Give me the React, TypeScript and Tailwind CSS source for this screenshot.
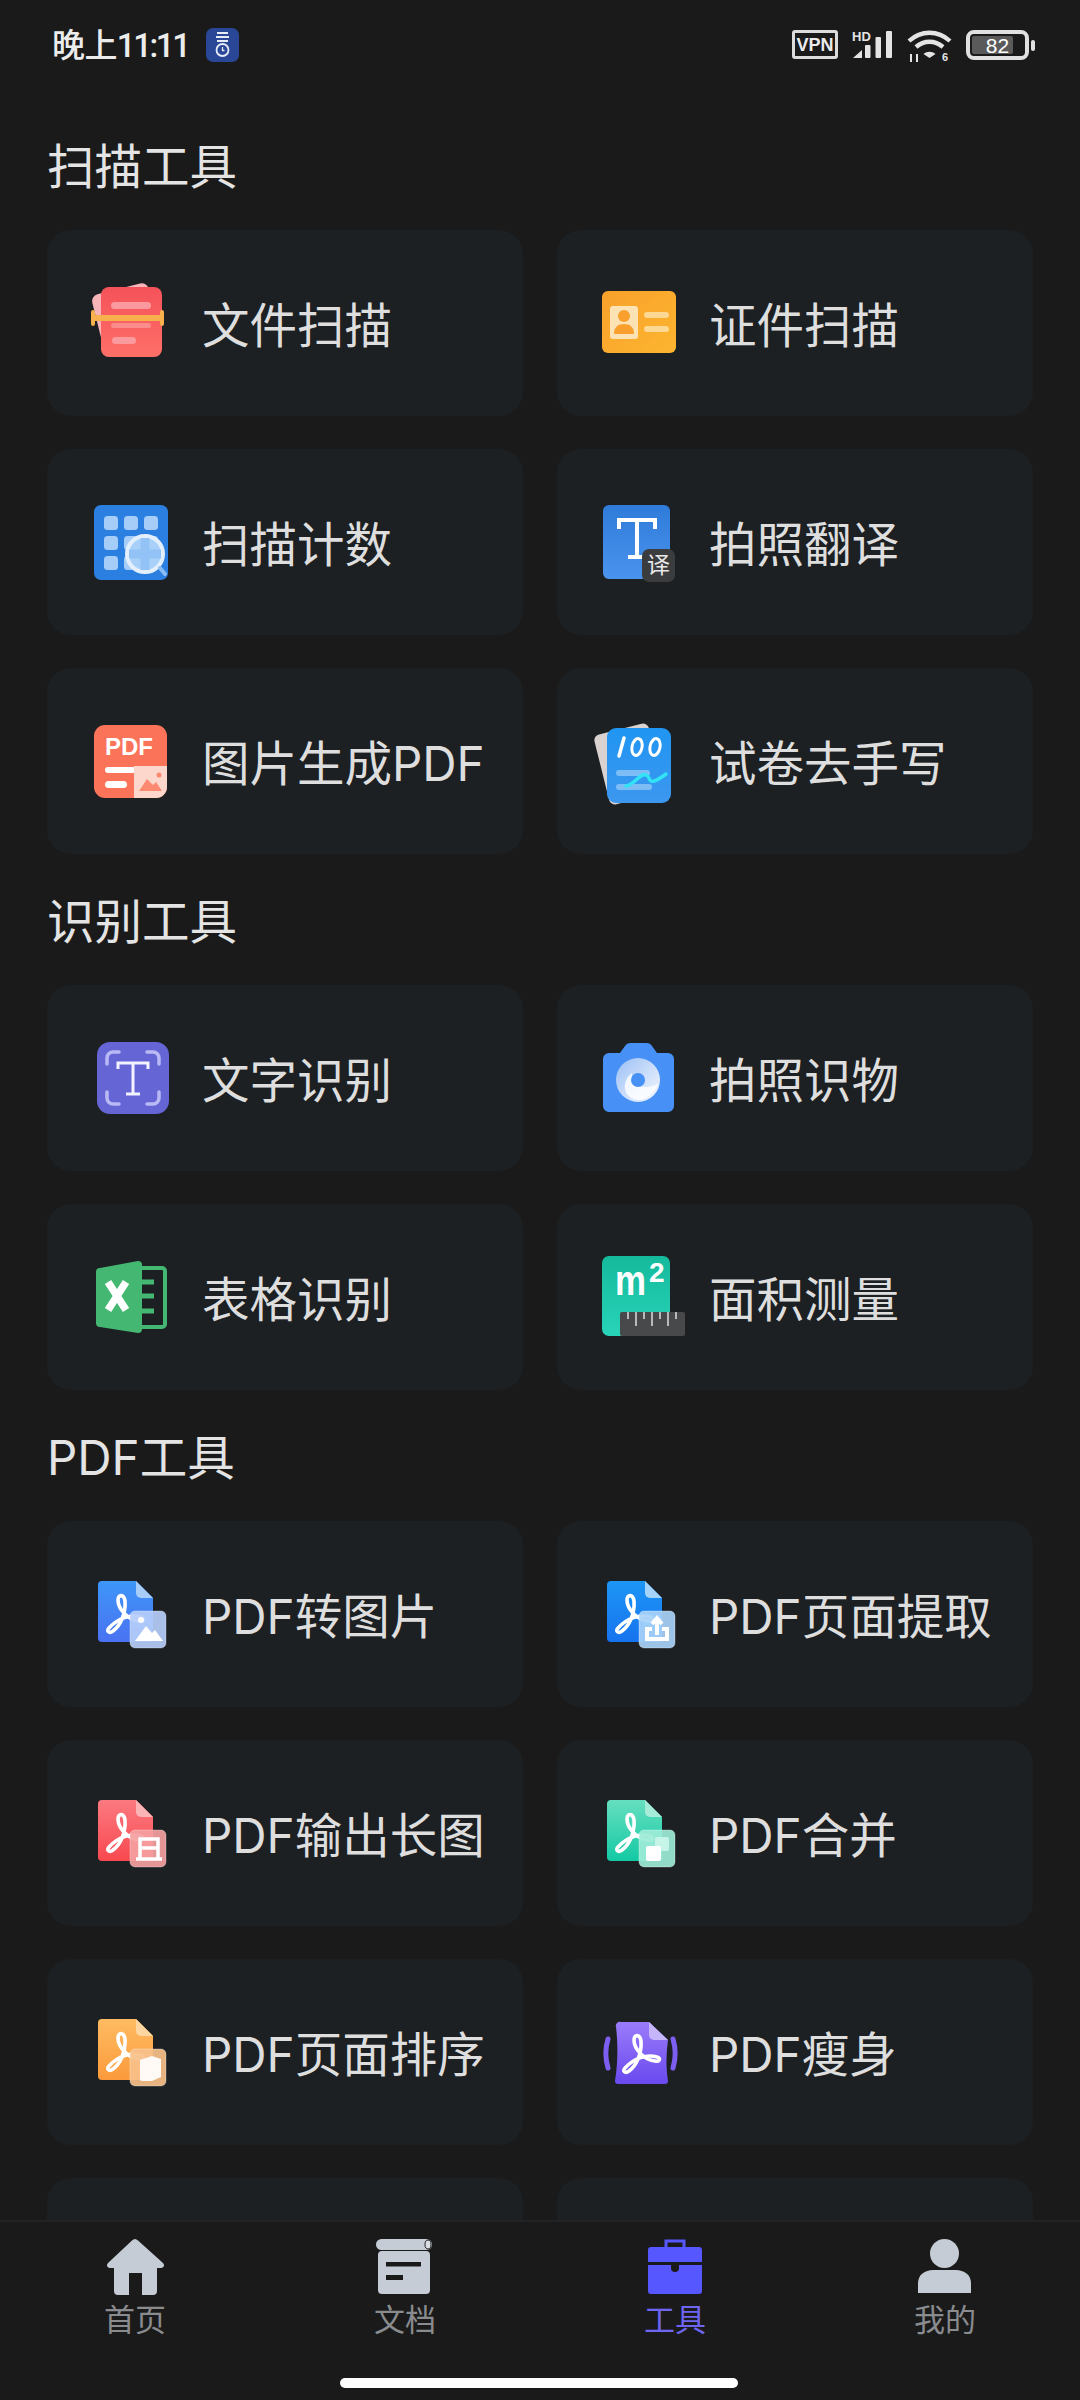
import type { ReactNode } from "react";

const BODY_FONT = "font-['Inter','Noto_Sans_CJK_SC',sans-serif]";

// Adobe style glyph shared by all the PDF tools
function AcrobatMark({ dx = 0, dy = 0 }: { dx?: number; dy?: number }) {
  return (
    <path
      transform={`translate(${dx} ${dy})`}
      d="M27 59c-3 3 0 6 4 3 7-5 13-17 12-30-1-7-7-7-7-1 0 9 10 20 21 21 5 1 6-3 2-4-10-3-23 1-32 11z"
      fill="none"
      stroke="#fff"
      strokeWidth="3.6"
      strokeLinejoin="round"
    />
  );
}

function PdfIcon({
  id,
  from,
  to,
  fold,
  glass,
  dx = 0,
  children,
}: {
  id: string;
  from: string;
  to: string;
  fold: string;
  glass: string;
  dx?: number;
  children: ReactNode;
}) {
  return (
    <svg viewBox="0 0 90 90" className="h-[90px] w-[90px]">
      <defs>
        <linearGradient id={id} x1="0" y1="0" x2="0" y2="1">
          <stop offset="0" stopColor={from} />
          <stop offset="1" stopColor={to} />
        </linearGradient>
      </defs>
      <g transform={`translate(${dx} 0)`}>
        <path d="M20 12h34l17 17v40a4 4 0 0 1-4 4H20a4 4 0 0 1-4-4V16a4 4 0 0 1 4-4z" fill={`url(#${id})`} />
        <path d="M54 12l17 17H59a5 5 0 0 1-5-5z" fill={fold} />
        <AcrobatMark />
        <rect x="48" y="42" width="36" height="37" rx="5" fill={glass} fillOpacity="0.92" stroke="#fff" strokeOpacity="0.3" />
        {children}
      </g>
    </svg>
  );
}

function DocScanIcon() {
  return (
    <svg viewBox="0 0 90 90" className="h-[90px] w-[90px]">
      <defs>
        <linearGradient id="scanRed" x1="0" y1="0" x2="0" y2="1">
          <stop offset="0" stopColor="#f4525a" />
          <stop offset="1" stopColor="#ff7068" />
        </linearGradient>
      </defs>
      <rect x="15" y="10" width="58" height="60" rx="7" fill="#f7b4b8" transform="rotate(-14 44 40)" />
      <rect x="19" y="9" width="61" height="70" rx="8" fill="url(#scanRed)" />
      <rect x="29" y="24" width="40" height="7" rx="3.5" fill="#fb9a9e" />
      <rect x="29" y="45" width="40" height="5" rx="2.5" fill="#fb8c8c" />
      <rect x="30" y="59" width="24" height="7" rx="3.5" fill="#fb9a9e" />
      <path d="M12 40h66" stroke="#f6b04d" strokeWidth="6" />
      <path d="M11 34v12M80 34v12" stroke="#f6b04d" strokeWidth="4" strokeLinecap="round" />
    </svg>
  );
}

function IdCardIcon() {
  return (
    <svg viewBox="0 0 90 90" className="h-[90px] w-[90px]">
      <defs>
        <linearGradient id="idOrange" x1="0" y1="0" x2="1" y2="1">
          <stop offset="0" stopColor="#f8a12c" />
          <stop offset="1" stopColor="#fdb52f" />
        </linearGradient>
      </defs>
      <rect x="10" y="13" width="74" height="62" rx="6" fill="url(#idOrange)" />
      <rect x="18" y="28" width="28" height="33" rx="3" fill="#fde3b4" />
      <circle cx="32" cy="38" r="6" fill="#f89f2e" />
      <path d="M22 56c0-7 4-10 10-10s10 3 10 10z" fill="#f89f2e" />
      <rect x="52" y="34" width="25" height="6" rx="3" fill="#fdd892" />
      <rect x="52" y="48" width="25" height="6" rx="3" fill="#fdd892" />
    </svg>
  );
}

function CountIcon() {
  const cols = [22, 42, 62];
  const rows = [19, 39, 59];
  return (
    <svg viewBox="0 0 90 90" className="h-[90px] w-[90px]">
      <rect x="12" y="8" width="74" height="75" rx="7" fill="#2b7fe0" />
      {rows.map((y) =>
        cols.map((x) => <rect key={`${x}-${y}`} x={x} y={y} width="14" height="14" rx="3.5" fill="#a5cdf7" />),
      )}
      <circle cx="63" cy="57" r="18" fill="#a9d0f9" stroke="#e3effc" strokeWidth="4" />
      <path d="M63 41v32M47 57h32" stroke="#93c3f6" strokeWidth="9" />
      <path d="M78 71l5 6" stroke="#8bbdf4" strokeWidth="4" strokeLinecap="round" />
    </svg>
  );
}

function TranslateIcon() {
  return (
    <svg viewBox="0 0 90 90" className="h-[90px] w-[90px]">
      <defs>
        <linearGradient id="transBlue" x1="0" y1="0" x2="0" y2="1">
          <stop offset="0" stopColor="#2f7bd9" />
          <stop offset="1" stopColor="#4a94ee" />
        </linearGradient>
      </defs>
      <rect x="11" y="8" width="67" height="74" rx="6" fill="url(#transBlue)" />
      <path d="M27 32v-9h36v9M45 23v37M36 60h18" fill="none" stroke="#fff" strokeWidth="4" />
      <rect x="50" y="52" width="33" height="33" rx="7" fill="#3b3c3e" />
      <text x="66.5" y="76" textAnchor="middle" fontSize="23" fill="#e8e8e8" fontFamily="'Noto Sans CJK SC',sans-serif">
        译
      </text>
    </svg>
  );
}

function PdfMakeIcon() {
  return (
    <svg viewBox="0 0 90 90" className="h-[90px] w-[90px]">
      <rect x="12" y="9" width="73" height="73" rx="11" fill="#fb7459" />
      <text x="47" y="39" textAnchor="middle" fontSize="24" fontWeight="700" fill="#fff" fontFamily="'Liberation Sans',sans-serif">
        PDF
      </text>
      <rect x="23" y="51" width="31" height="6" rx="3" fill="#fff" />
      <rect x="23" y="65" width="22" height="7" rx="3.5" fill="#fff" />
      <path d="M52 50h33v21a11 11 0 0 1-11 11H52z" fill="#fdd7cc" />
      <path d="M57 75l8-12 6 6 3-3 6 9z" fill="#fb8a70" />
      <circle cx="77" cy="59" r="2.5" fill="#fb8a70" />
    </svg>
  );
}

function ExamIcon() {
  return (
    <svg viewBox="0 0 90 90" className="h-[90px] w-[90px]">
      <defs>
        <linearGradient id="examBlue" x1="0" y1="0" x2="0" y2="1">
          <stop offset="0" stopColor="#1f95f2" />
          <stop offset="1" stopColor="#3d97ef" />
        </linearGradient>
      </defs>
      <rect x="9" y="12" width="56" height="72" rx="6" fill="#d9d2d0" transform="rotate(-14 37 48)" />
      <rect x="15" y="12" width="64" height="75" rx="9" fill="url(#examBlue)" />
      <path d="M27 40l5-18" stroke="#fff" strokeWidth="3.5" strokeLinecap="round" />
      <ellipse cx="45" cy="31" rx="5" ry="8.5" fill="none" stroke="#fff" strokeWidth="3" transform="rotate(12 45 31)" />
      <ellipse cx="63" cy="31" rx="5" ry="8.5" fill="none" stroke="#fff" strokeWidth="3" transform="rotate(12 63 31)" />
      <rect x="24" y="54" width="34" height="6" rx="3" fill="#7cbdf6" />
      <rect x="24" y="68" width="36" height="6" rx="3" fill="#7cbdf6" />
      <path d="M34 70c8-1 14-13 20-11 5 2 2 8 8 6 4-1 8-4 12-7" fill="none" stroke="#31e3f5" strokeWidth="3.5" strokeLinecap="round" />
    </svg>
  );
}

function OcrIcon() {
  return (
    <svg viewBox="0 0 90 90" className="h-[90px] w-[90px]">
      <rect x="15" y="9" width="72" height="72" rx="13" fill="#6565d6" />
      <path
        d="M25 31v-6a6 6 0 0 1 6-6h6M65 19h6a6 6 0 0 1 6 6v6M25 59v6a6 6 0 0 0 6 6h6M65 71h6a6 6 0 0 0 6-6v-6"
        fill="none"
        stroke="#b9b9f5"
        strokeWidth="3.5"
        strokeLinecap="round"
      />
      <path d="M36 36v-6h30v6M51 30v31M44 61h14" fill="none" stroke="#f3f2ff" strokeWidth="3" />
    </svg>
  );
}

function CameraIcon() {
  return (
    <svg viewBox="0 0 90 90" className="h-[90px] w-[90px]">
      <defs>
        <linearGradient id="lensFill" x1="0" y1="0" x2="1" y2="1">
          <stop offset="0" stopColor="#9cc0f5" />
          <stop offset="1" stopColor="#f5f8ff" />
        </linearGradient>
      </defs>
      <path
        d="M17 20h11l5-7a6 6 0 0 1 5-3h17a6 6 0 0 1 5 3l5 7h11a6 6 0 0 1 6 6v47a6 6 0 0 1-6 6H17a6 6 0 0 1-6-6V26a6 6 0 0 1 6-6z"
        fill="#4790f5"
      />
      <circle cx="46" cy="47" r="22" fill="url(#lensFill)" />
      <path d="M34 60c-3-8 0-16 6-20-1 8 4 14 14 14 4 0 8-1 12-3-3 9-11 16-20 16-5 0-9-3-12-7z" fill="#fff" opacity="0.8" />
      <circle cx="46" cy="47" r="7" fill="#4790f5" />
    </svg>
  );
}

function ExcelIcon() {
  return (
    <svg viewBox="0 0 90 90" className="h-[90px] w-[90px]">
      <rect x="50" y="16" width="33" height="59" rx="3" fill="none" stroke="#44b873" strokeWidth="4" />
      <path d="M58 30h14M58 44h14M58 59h14" stroke="#44b873" strokeWidth="5" />
      <path d="M18 16l38-7a4 4 0 0 1 4 4v64a4 4 0 0 1-4 4l-38-6a4 4 0 0 1-4-4V20a4 4 0 0 1 4-4z" fill="#44b873" />
      <path d="M26 30l18 28M44 30L26 58" stroke="#fff" strokeWidth="7.5" />
    </svg>
  );
}

function AreaIcon() {
  return (
    <svg viewBox="0 0 94 90" className="h-[90px] w-[94px] overflow-visible">
      <defs>
        <linearGradient id="areaGreen" x1="0" y1="0" x2="0" y2="1">
          <stop offset="0" stopColor="#15b99c" />
          <stop offset="1" stopColor="#28d4b8" />
        </linearGradient>
      </defs>
      <rect x="10" y="4" width="68" height="80" rx="7" fill="url(#areaGreen)" />
      <text x="23" y="43" fontSize="42" fontWeight="700" fill="#fff" textLength="31" lengthAdjust="spacingAndGlyphs" fontFamily="'Liberation Sans',sans-serif">
        m
      </text>
      <text x="57" y="30" fontSize="28" fontWeight="700" fill="#fff" fontFamily="'Liberation Sans',sans-serif">
        2
      </text>
      <rect x="28" y="60" width="65" height="24" rx="2" fill="#47494b" />
      <path d="M36 60v7M44 60v14M52 60v7M60 60v14M68 60v7M76 60v14M84 60v7" stroke="#b9b9b9" strokeWidth="2" />
    </svg>
  );
}

function SlimIcon() {
  return (
    <svg viewBox="0 0 90 90" className="h-[90px] w-[90px]">
      <defs>
        <linearGradient id="slimPurple" x1="0" y1="0" x2="0" y2="1">
          <stop offset="0" stopColor="#9a7cfb" />
          <stop offset="1" stopColor="#6a49ee" />
        </linearGradient>
      </defs>
      <path d="M29 15h28l19 18c-2 14-2 28 0 41a3 3 0 0 1-3 3H26a3 3 0 0 1-3-3c3-18 3-38 1-54a4 4 0 0 1 5-5z" fill="url(#slimPurple)" />
      <path d="M57 15l19 18H62a5 5 0 0 1-5-5z" fill="#c5b5fb" />
      <path d="M16 32c-3 10-3 19 0 29" fill="none" stroke="#7c5ff0" strokeWidth="5" strokeLinecap="round" />
      <path d="M81 32c3 10 3 19 0 29" fill="none" stroke="#7c5ff0" strokeWidth="5" strokeLinecap="round" />
      <AcrobatMark dx={6} dy={2} />
    </svg>
  );
}

const pdfImage = (
  <PdfIcon id="pdfBlue" from="#3e96f8" to="#4a72f2" fold="#a9cdf9" glass="#b5cdf8">
    <circle cx="59" cy="51" r="3" fill="#fff" />
    <path d="M53 72l11-15 6 7 3-3 8 11z" fill="#fff" />
  </PdfIcon>
);
const pdfExtract = (
  <PdfIcon id="pdfSky" from="#1d96f6" to="#1673ee" fold="#a6d3fa" glass="#a8d3f9" dx={-1}>
    <path d="M61 60h-5v10h20V60h-5" fill="none" stroke="#fff" strokeWidth="4" />
    <path d="M66 66V50m-5 5l5-6 5 6" fill="none" stroke="#fff" strokeWidth="4" />
  </PdfIcon>
);
const pdfLong = (
  <PdfIcon id="pdfRed" from="#fb7a80" to="#f8484f" fold="#fbb4b6" glass="#f59fa1">
    <path d="M58 51h18v20H58zM58 60h18M54 71h26" fill="none" stroke="#fff" strokeWidth="3.5" />
  </PdfIcon>
);
const pdfMerge = (
  <PdfIcon id="pdfTeal" from="#66dfc0" to="#14c9a4" fold="#a6ecd9" glass="#9decd8" dx={-1}>
    <rect x="64" y="49" width="14" height="14" rx="2" fill="#c6f5e8" />
    <rect x="55" y="58" width="15" height="15" rx="2" fill="#fff" />
  </PdfIcon>
);
const pdfSort = (
  <PdfIcon id="pdfOrange" from="#ffbb62" to="#fb9a3c" fold="#fdd79f" glass="#f9c08a">
    <path d="M58 53l12-4 9 3v18l-9 4H60a2 2 0 0 1-2-2z" fill="#fff" opacity="0.92" />
  </PdfIcon>
);

type Tool = { label?: string; icon?: ReactNode };

const scanTools: Tool[] = [
  { label: "文件扫描", icon: <DocScanIcon /> },
  { label: "证件扫描", icon: <IdCardIcon /> },
  { label: "扫描计数", icon: <CountIcon /> },
  { label: "拍照翻译", icon: <TranslateIcon /> },
  { label: "图片生成PDF", icon: <PdfMakeIcon /> },
  { label: "试卷去手写", icon: <ExamIcon /> },
];

const recognizeTools: Tool[] = [
  { label: "文字识别", icon: <OcrIcon /> },
  { label: "拍照识物", icon: <CameraIcon /> },
  { label: "表格识别", icon: <ExcelIcon /> },
  { label: "面积测量", icon: <AreaIcon /> },
];

const pdfTools: Tool[] = [
  { label: "PDF转图片", icon: pdfImage },
  { label: "PDF页面提取", icon: pdfExtract },
  { label: "PDF输出长图", icon: pdfLong },
  { label: "PDF合并", icon: pdfMerge },
  { label: "PDF页面排序", icon: pdfSort },
  { label: "PDF瘦身", icon: <SlimIcon /> },
  {},
  {},
];

function ToolCard({ tool, right }: { tool: Tool; right: boolean }) {
  return (
    <div className={`flex h-[186px] items-center rounded-[24px] bg-[#1c2023] pl-[35px] ${right ? "gap-[27px]" : "gap-[30px]"}`}>
      <div className="h-[90px] w-[90px] shrink-0">{tool.icon}</div>
      <span className="pt-[6px] text-[47.5px] leading-none whitespace-nowrap text-[#dedede]">{tool.label}</span>
    </div>
  );
}

function ToolSection({ title, tools }: { title: string; tools: Tool[] }) {
  return (
    <section className="mb-[32px]">
      <h2 className="mb-[33px] flex h-[66px] items-center pt-[6px] text-[47.5px] font-normal text-[#e4e4e4]">{title}</h2>
      <div className="grid grid-cols-2 gap-x-[34px] gap-y-[33px]">
        {tools.map((tool, i) => (
          <ToolCard key={tool.label ?? i} tool={tool} right={i % 2 === 1} />
        ))}
      </div>
    </section>
  );
}

function StatusBar() {
  return (
    <div className="flex h-[90px] shrink-0 items-start justify-between pt-[28px] pr-[45px] pl-[52px] text-[#ececec]">
      <div className="flex h-[34px] items-center gap-[17px]">
        <span className="font-['Roboto','Noto_Sans_CJK_SC',sans-serif] text-[33px] leading-none font-medium tracking-[-0.6px]">
          晚上<span className="tracking-[-2.4px]">11:11</span>
        </span>
        <svg viewBox="0 0 33 34" className="h-[34px] w-[33px]">
          <rect width="33" height="34" rx="7" fill="#2a4696" />
          <path d="M11 5h11M10 9h13M11 13h11" stroke="#e6ebf8" strokeWidth="1.8" />
          <circle cx="16.5" cy="22" r="6" fill="none" stroke="#e6ebf8" strokeWidth="1.8" />
          <path d="M16.5 19v3.5h2" fill="none" stroke="#e6ebf8" strokeWidth="1.3" />
        </svg>
      </div>
      <div className="flex items-start">
        <div className="mt-[2px] flex h-[29px] w-[46px] items-center justify-center rounded-[3px] border-[3px] border-[#dcdcdc] font-['Liberation_Sans',sans-serif] text-[18px] leading-none font-bold">
          VPN
        </div>
        <svg viewBox="0 0 41 30" className="mt-[2px] ml-[14px] h-[30px] w-[41px]">
          <text x="0" y="11" fontSize="13" fontWeight="700" fill="#e4e4e4" fontFamily="'Liberation Sans',sans-serif">
            HD
          </text>
          <path d="M1 28l9-8v8z" fill="#e4e4e4" />
          <rect x="13" y="15" width="5.5" height="13" rx="1" fill="#e4e4e4" />
          <rect x="23.5" y="7" width="5.5" height="21" rx="1" fill="#e4e4e4" />
          <rect x="34" y="1" width="6" height="27" rx="1" fill="#e4e4e4" />
        </svg>
        <svg viewBox="0 0 45 36" className="mt-[2px] ml-[14px] h-[36px] w-[45px]">
          <path d="M2 11c12-11 29-11 41 0" fill="none" stroke="#e4e4e4" strokeWidth="4.4" />
          <path d="M9 17c8-7 19-7 27 0" fill="none" stroke="#e4e4e4" strokeWidth="4.4" />
          <path d="M22.5 28l-6-4c3.5-3 8.5-3 12 0z" fill="#e4e4e4" />
          <path d="M4 24v8M10 24v8" stroke="#e4e4e4" strokeWidth="2" />
          <text x="35" y="31" fontSize="11" fontWeight="700" fill="#e4e4e4" fontFamily="'Liberation Sans',sans-serif">
            6
          </text>
        </svg>
        <div className="mt-[2px] ml-[14px] flex items-center">
          <div className="relative flex h-[30px] w-[63px] items-center justify-center overflow-hidden rounded-[8px] border-[4px] border-[#e0e0e0]">
            <div className="absolute inset-y-[2px] left-[2px] w-[41px] rounded-[2px] bg-[#5a5a5a]" />
            <span className="relative font-['Liberation_Sans',sans-serif] text-[21px] leading-none text-white">82</span>
          </div>
          <div className="ml-[2px] h-[11px] w-[4px] rounded-full bg-[#e0e0e0]" />
        </div>
      </div>
    </div>
  );
}

function NavItem({ label, active, icon }: { label: string; active?: boolean; icon: ReactNode }) {
  return (
    <div className="flex flex-col items-center">
      <div className="flex h-[60px] items-center justify-center">{icon}</div>
      <span className={`mt-[6px] text-[31px] leading-[36px] ${active ? "text-[#6e66f2]" : "text-[#898b8f]"}`}>{label}</span>
    </div>
  );
}

function BottomNav() {
  return (
    <nav className="relative h-[180px] shrink-0 border-t-2 border-[#222324] bg-[#1a1a1a] pt-[14px]">
      <div className="grid grid-cols-4">
        <NavItem
          label="首页"
          icon={
            <svg viewBox="0 0 60 60" className="h-[60px] w-[60px]">
              <path
                d="M30 3c1 0 2 .5 3 1.500L58 27c2 2 1 5-2 5h-4v23a4 4 0 0 1-4 4H37V37H24v22H13a4 4 0 0 1-4-4V32H5c-3 0-4-3-2-5L27 4.500C28 3.500 29 3 30 3z"
                fill="#c5ccd6"
              />
            </svg>
          }
        />
        <NavItem
          label="文档"
          icon={
            <svg viewBox="0 0 60 60" className="h-[60px] w-[60px]">
              <rect x="1" y="3" width="56" height="11" rx="5.500" fill="#c5ccd6" />
              <ellipse cx="53" cy="8.500" rx="3" ry="4.500" fill="#d8dde4" stroke="#1a1a1a" strokeWidth="1" />
              <rect x="3" y="15" width="52" height="43" rx="4" fill="#c5ccd6" />
              <rect x="11" y="26" width="35" height="4.500" fill="#1a1a1a" />
              <rect x="11" y="39" width="17" height="5" fill="#1a1a1a" />
            </svg>
          }
        />
        <NavItem
          label="工具"
          active
          icon={
            <svg viewBox="0 0 60 60" className="h-[60px] w-[60px]">
              <path d="M21 11V5h18v6" fill="none" stroke="#5757ff" strokeWidth="3" />
              <path d="M6 11h48a3 3 0 0 1 3 3v12H3V14a3 3 0 0 1 3-3z" fill="#5757ff" />
              <path d="M3 29h23v3a4 4 0 0 0 8 0v-3h23v26a3 3 0 0 1-3 3H6a3 3 0 0 1-3-3z" fill="#5757ff" />
            </svg>
          }
        />
        <NavItem
          label="我的"
          icon={
            <svg viewBox="0 0 60 60" className="h-[60px] w-[60px]">
              <ellipse cx="29.500" cy="17.500" rx="14.500" ry="14.500" fill="#c5ccd6" />
              <path d="M3 57V47c0-8 7-13 15-13h23c8 0 15 5 15 13v10z" fill="#c5ccd6" />
            </svg>
          }
        />
      </div>
      <div className="absolute top-[156px] left-[340px] h-[10px] w-[398px] rounded-full bg-white" />
    </nav>
  );
}

export default function App() {
  return (
    <div className={`flex h-[2400px] w-[1080px] flex-col overflow-hidden bg-[#1a1a1a] ${BODY_FONT}`}>
      <StatusBar />
      <main className="min-h-0 flex-1 overflow-hidden px-[47px] pt-[41px]">
        <ToolSection title="扫描工具" tools={scanTools} />
        <ToolSection title="识别工具" tools={recognizeTools} />
        <ToolSection title="PDF工具" tools={pdfTools} />
      </main>
      <BottomNav />
    </div>
  );
}
